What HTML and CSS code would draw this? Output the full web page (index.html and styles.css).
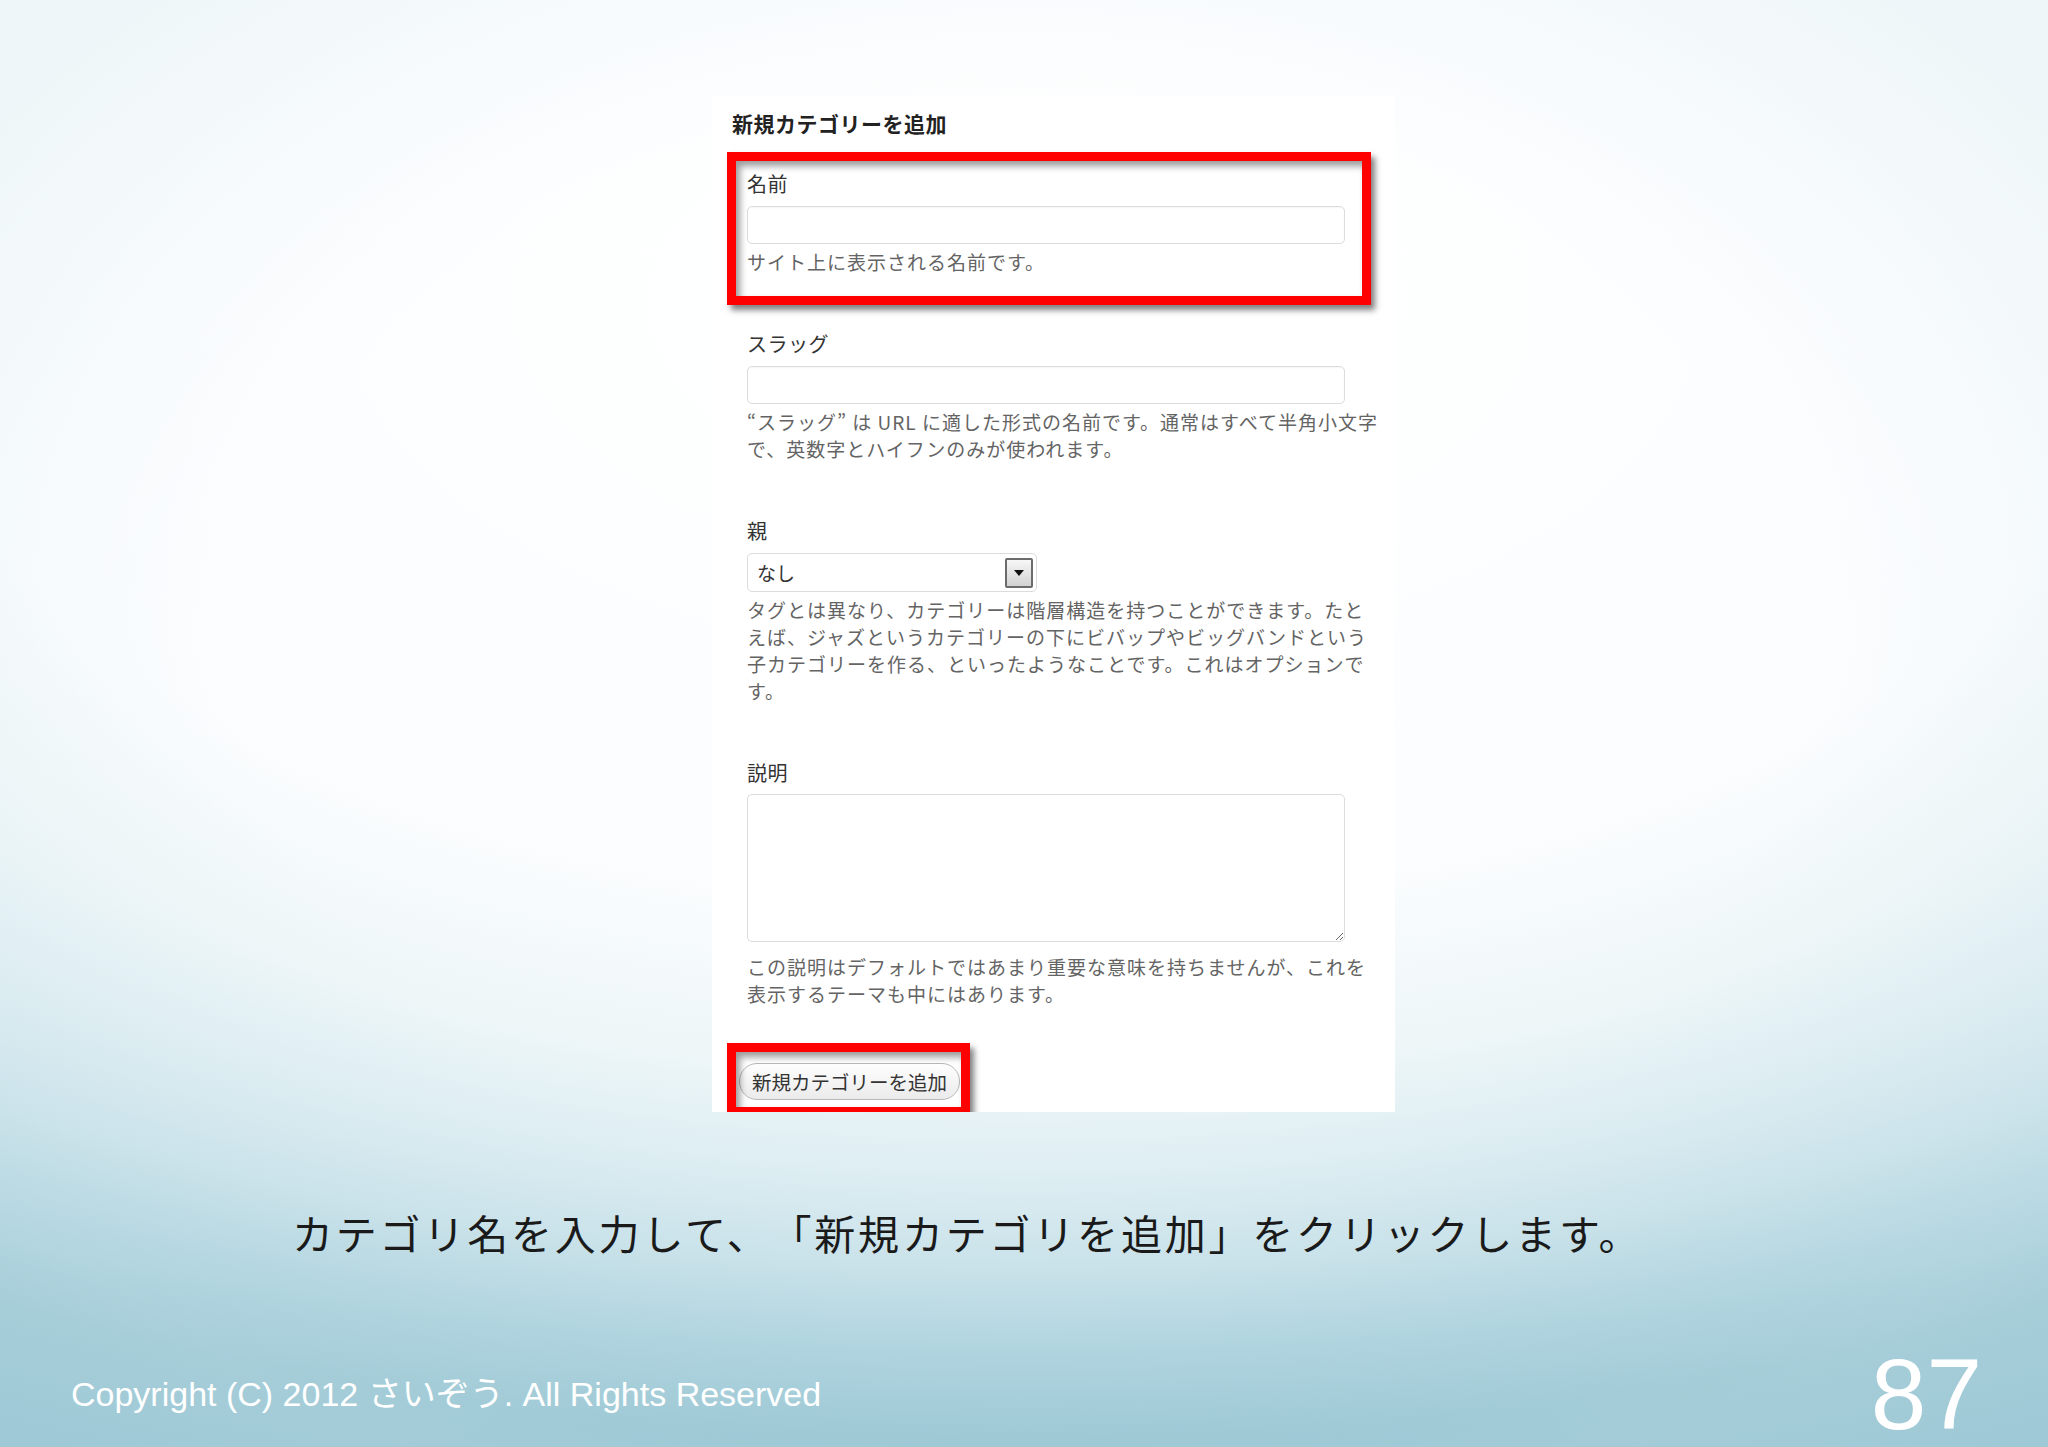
FILE: index.html
```html
<!DOCTYPE html>
<html lang="ja">
<head>
<meta charset="utf-8">
<title>新規カテゴリーを追加</title>
<link rel="stylesheet" href="styles.css">
</head>
<body>
<div class="slide">
  <section class="panel">
    <h3 class="panel-title">新規カテゴリーを追加</h3>
    <form class="form">
      <div class="field field-first">
        <label class="label">名前</label>
        <input class="input" type="text">
        <p class="help">サイト上に表示される名前です。</p>
      </div>
      <div class="field">
        <label class="label">スラッグ</label>
        <input class="input" type="text">
        <p class="help">“スラッグ” は URL に適した形式の名前です。通常はすべて半角小文字<br>で、英数字とハイフンのみが使われます。</p>
      </div>
      <div class="field">
        <label class="label">親</label>
        <div class="select">
          <span class="select-value">なし</span>
          <span class="select-btn"><svg width="10" height="6" viewBox="0 0 10 6"><path d="M0 0H10L5 6Z" fill="#111"/></svg></span>
        </div>
        <p class="help">タグとは異なり、カテゴリーは階層構造を持つことができます。たと<br>えば、ジャズというカテゴリーの下にビバップやビッグバンドという<br>子カテゴリーを作る、といったようなことです。これはオプションで<br>す。</p>
      </div>
      <div class="field">
        <label class="label">説明</label>
        <textarea class="textarea"></textarea>
        <p class="help help-after-area">この説明はデフォルトではあまり重要な意味を持ちませんが、これを<br>表示するテーマも中にはあります。</p>
      </div>
      <button class="submit" type="button">新規カテゴリーを追加</button>
    </form>
    <div class="highlight hl-name"></div>
    <div class="highlight hl-submit"></div>
  </section>
  <p class="caption">カテゴリ名を入力して、「新規カテゴリを追加」をクリックします。</p>
  <footer class="footer">
    <span class="copyright">Copyright (C) 2012 さいぞう. All Rights Reserved</span>
    <span class="page-num">87</span>
  </footer>
</div>
</body>
</html>
```

FILE: styles.css
```css
html, body {
  margin: 0;
  padding: 0;
}

body {
  width: 2048px;
  height: 1447px;
  overflow: hidden;
  background:
    radial-gradient(ellipse 1300px 900px at 50% 45%, rgba(215, 233, 239, 0) 60%, rgba(215, 233, 239, 0.35) 100%),
    radial-gradient(ellipse 2666px 1425px at 1024px 300px, #ffffff 0%, #fbfdfe 42%, #eef6f8 54%, #dcedf2 62%, #c8e1e9 68%, #a8d0dc 74%, #8cbfcd 80%, #7db6c7 90%, #72aec1 100%);
  font-family: "Noto Sans CJK JP", sans-serif;
  text-spacing-trim: space-all;
}

.slide {
  box-sizing: border-box;
  height: 1447px;
  padding: 96px 0 3px;
  display: flex;
  flex-direction: column;
  align-items: flex-start;
}

/* ---------- screenshot panel ---------- */
.panel {
  position: relative;
  overflow: hidden;
  box-sizing: border-box;
  margin-left: 712px;
  width: 683px;
  height: 1016px;
  padding: 14px 0 0 20px;
  background: #ffffff;
  font-family: "Noto Sans CJK JP", sans-serif;
}

.panel-title {
  margin: 0;
  font-size: 21px;
  line-height: 26px;
  letter-spacing: 0.5px;
  font-weight: 700;
  color: #222;
}

.form {
  margin: 0 0 0 15px;
  display: flex;
  flex-direction: column;
  align-items: flex-start;
}

.field {
  display: flex;
  flex-direction: column;
  align-items: flex-start;
  margin-top: 56px;
}

.field-first {
  margin-top: 35px;
}

.label {
  display: block;
  font-size: 20px;
  line-height: 26px;
  letter-spacing: 0.5px;
  color: #333;
}

.input {
  display: block;
  box-sizing: border-box;
  margin: 9px 0 0;
  width: 598px;
  height: 38px;
  border: 1px solid #dcdcdc;
  border-radius: 5px;
  background: #fff;
  box-shadow: inset 0 1px 2px rgba(0, 0, 0, 0.04);
  outline: none;
}

.help {
  margin: 4px 0 0;
  font-size: 19px;
  letter-spacing: 1px;
  line-height: 27px;
  color: #646464;
  white-space: nowrap;
}

.help-after-area {
  margin-top: 11px;
}

.select {
  box-sizing: border-box;
  margin-top: 9px;
  width: 290px;
  height: 39px;
  border: 1px solid #dcdcdc;
  border-radius: 5px;
  background: #fff;
  display: flex;
  align-items: center;
  justify-content: space-between;
  padding: 0 3px 0 9px;
}

.select-value {
  font-size: 19px;
  color: #333;
  line-height: 27px;
}

.select-btn {
  box-sizing: border-box;
  width: 28px;
  height: 30px;
  border: 2px solid #6c6c6c;
  border-radius: 2px;
  background: linear-gradient(#f7f7f7, #d2d2d2);
  display: flex;
  align-items: center;
  justify-content: center;
}

.textarea {
  display: block;
  box-sizing: border-box;
  margin: 8px 0 0;
  width: 598px;
  height: 148px;
  border: 1px solid #dcdcdc;
  border-radius: 5px;
  background: #fff;
  font-family: "Noto Sans CJK JP", sans-serif;
  outline: none;
}

.submit {
  margin: 56px 0 0 -8px;
  box-sizing: border-box;
  height: 37px;
  width: 221px;
  padding: 0;
  border: 1px solid #b9b9b9;
  border-radius: 18px;
  background: linear-gradient(#fefefe, #ebebeb);
  font-family: "Noto Sans CJK JP", sans-serif;
  font-size: 19.5px;
  line-height: 35px;
  color: #333;
}

/* red annotation frames laid over the screenshot */
.highlight {
  position: absolute;
  box-sizing: border-box;
  border: 9px solid #ff0000;
  box-shadow: 4px 5px 6px rgba(0, 0, 0, 0.5), inset 4px 5px 7px rgba(0, 0, 0, 0.4);
  pointer-events: none;
}

.hl-name {
  left: 15px;
  top: 56px;
  width: 644px;
  height: 153px;
}

.hl-submit {
  left: 15px;
  top: 947px;
  width: 243px;
  height: 73px;
}

/* ---------- slide text ---------- */
.caption {
  margin: 100px 0 0 292px;
  font-family: "Noto Sans CJK JP", sans-serif;
  font-size: 41px;
  line-height: 40px;
  letter-spacing: 2.8px;
  color: #1a1a1a;
  white-space: nowrap;
}

.footer {
  margin-top: auto;
  box-sizing: border-box;
  width: 100%;
  padding: 0 66px 0 71px;
  display: flex;
  justify-content: space-between;
  align-items: flex-end;
  color: #ffffff;
  font-family: "Liberation Sans", "Noto Sans CJK JP", sans-serif;
}

.copyright {
  font-size: 34px;
  line-height: 34px;
  margin-bottom: 33px;
  white-space: nowrap;
}

.page-num {
  font-size: 100px;
  line-height: 100px;
}
```
